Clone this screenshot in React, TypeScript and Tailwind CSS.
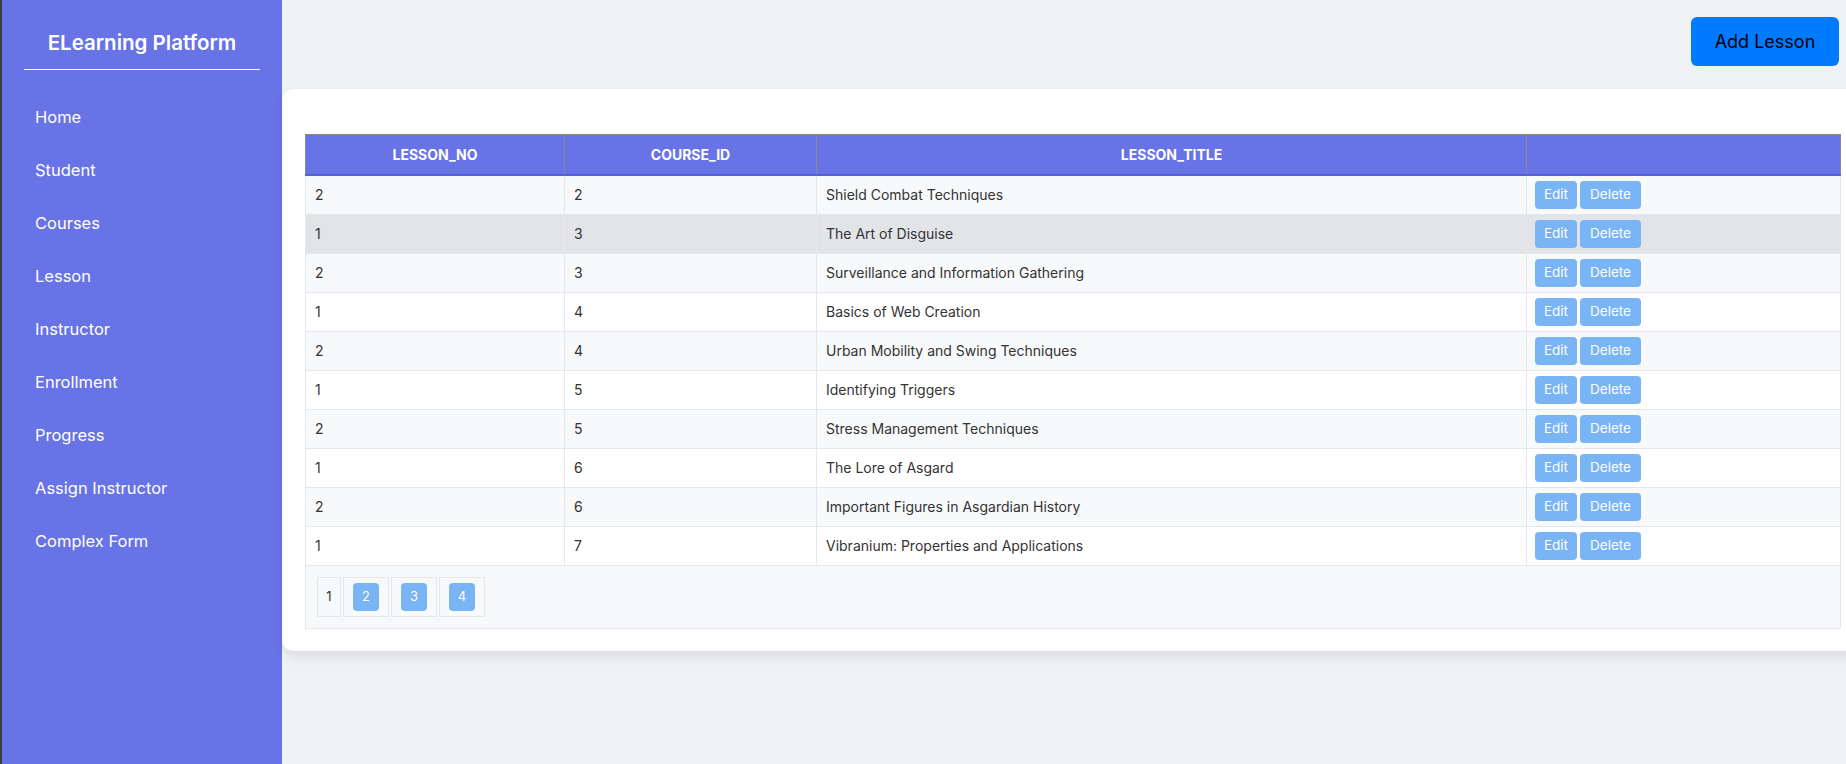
import React from "react";

const NAV = [
  "Home",
  "Student",
  "Courses",
  "Lesson",
  "Instructor",
  "Enrollment",
  "Progress",
  "Assign Instructor",
  "Complex Form",
];

const LESSONS = [
  { no: 2, course: 2, title: "Shield Combat Techniques" },
  { no: 1, course: 3, title: "The Art of Disguise" },
  { no: 2, course: 3, title: "Surveillance and Information Gathering" },
  { no: 1, course: 4, title: "Basics of Web Creation" },
  { no: 2, course: 4, title: "Urban Mobility and Swing Techniques" },
  { no: 1, course: 5, title: "Identifying Triggers" },
  { no: 2, course: 5, title: "Stress Management Techniques" },
  { no: 1, course: 6, title: "The Lore of Asgard" },
  { no: 2, course: 6, title: "Important Figures in Asgardian History" },
  { no: 1, course: 7, title: "Vibranium: Properties and Applications" },
];

const font = { fontFamily: "Inter, 'Noto Sans', sans-serif" };

function Sidebar() {
  return (
    <aside className="h-full w-[282px] shrink-0 border-l-2 border-[#3d3d3d] bg-[#6873e5] text-white">
      <h2 className="pt-[29px] text-center text-[20.5px] font-semibold leading-[28px]">
        ELearning Platform
      </h2>
      <div className="mx-[22px] mt-[12px] h-px bg-white" />
      <nav className="mt-[21px]">
        {NAV.map((item) => (
          <a key={item} className="flex h-[53px] items-center pl-[33px] text-[16.5px]">
            {item}
          </a>
        ))}
      </nav>
    </aside>
  );
}

function LessonTable() {
  const th = "border border-b-2 border-[#8a8a8a] border-b-[#5561d8]";
  const td = "border border-[#e6e7ec] px-[9px]";
  return (
    <table className="w-[1535px] table-fixed border-collapse text-[14px] text-[#333]">
      <colgroup>
        <col className="w-[259px]" />
        <col className="w-[252px]" />
        <col className="w-[710px]" />
        <col className="w-[314px]" />
      </colgroup>
      <thead>
        <tr className="h-[40px] bg-[#6873e5] text-[14px] font-bold text-white">
          <th className={th}>LESSON_NO</th>
          <th className={th}>COURSE_ID</th>
          <th className={th}>LESSON_TITLE</th>
          <th className={th} />
        </tr>
      </thead>
      <tbody>
        {LESSONS.map((row, i) => (
          <tr
            key={i}
            className={
              "h-[33px] " +
              (i === 1 ? "bg-[#e3e4e8]" : i % 2 === 0 ? "bg-[#f8f9fb]" : "bg-white")
            }
          >
            <td className={td}>{row.no}</td>
            <td className={td}>{row.course}</td>
            <td className={td}>{row.title}</td>
            <td className="border border-[#e6e7ec] px-[8px] py-[5px]">
              <div className="flex gap-[3px]">
                <button className="h-[28px] w-[42px] rounded-[4px] bg-[#79b4f4] text-[13.5px] text-white">
                  Edit
                </button>
                <button className="h-[28px] w-[61px] rounded-[4px] bg-[#79b4f4] text-[13.5px] text-white">
                  Delete
                </button>
              </div>
            </td>
          </tr>
        ))}
        <tr className="bg-[#f8f9fb]">
          <td colSpan={4} className="border border-[#e6e7ec] px-[11px] py-[11px]">
            <ul className="flex gap-[2px]">
              <li className="flex h-[40px] w-[24px] items-center justify-center border border-[#e6e7ec] text-[13px]">
                1
              </li>
              {[2, 3, 4].map((p) => (
                <li
                  key={p}
                  className="flex h-[40px] w-[46px] items-center justify-center border border-[#e6e7ec]"
                >
                  <span className="flex h-[28px] w-[26px] items-center justify-center rounded-[4px] bg-[#79b4f4] text-[13px] text-white">
                    {p}
                  </span>
                </li>
              ))}
            </ul>
          </td>
        </tr>
      </tbody>
    </table>
  );
}

export default function App() {
  return (
    <div className="flex h-[764px] w-[1846px] overflow-hidden bg-[#f0f1f5]" style={font}>
      <Sidebar />
      <main className="min-w-0 flex-1">
        <div className="flex justify-end pt-[17px] pr-[7px]">
          <button className="h-[49px] w-[148px] rounded-[6px] bg-[#007bff] text-[18px] text-black">
            Add Lesson
          </button>
        </div>
        <div className="mt-[23px] w-[1580px] rounded-xl bg-white px-[23px] pt-[45px] pb-[22px] shadow-[0_6px_12px_rgba(0,0,0,0.08)]">
          <LessonTable />
        </div>
      </main>
    </div>
  );
}
